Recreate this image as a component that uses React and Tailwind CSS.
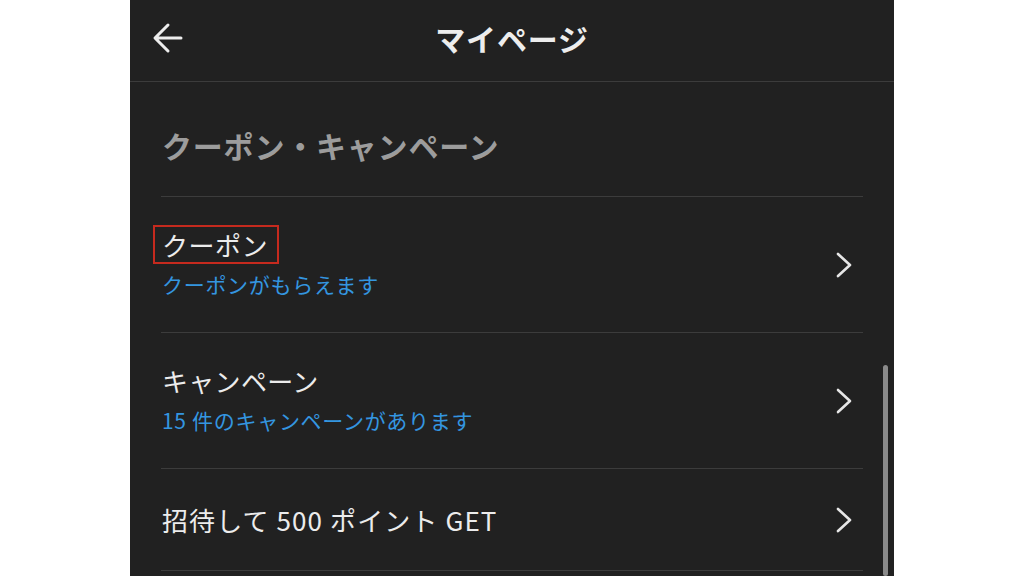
import React from "react";

const rows = [
  { title: "クーポン", sub: "クーポンがもらえます", boxed: true, track: "tracking-[0.5px]" },
  { title: "キャンペーン", sub: "15 件のキャンペーンがあります", track: "tracking-[0.3px]" },
  { title: "招待して 500 ポイント GET", track: "tracking-[1.1px]" },
];

function Chevron() {
  return (
    <svg width="16" height="26" viewBox="0 0 16 26" fill="none">
      <path d="M2 2 L14 13 L2 24" stroke="#e6e6e6" strokeWidth="2.6" strokeLinecap="round" strokeLinejoin="round" />
    </svg>
  );
}

export default function App() {
  return (
    <div
      className="w-[1024px] h-[576px] bg-white flex justify-center overflow-hidden"
      style={{ fontFamily: '"Noto Sans CJK JP", "Noto Sans", sans-serif' }}
    >
      <div className="w-[764px] h-full bg-[#212121] relative flex flex-col">
        {/* header */}
        <div className="h-[82px] shrink-0 border-b border-[#3c3c3c] flex items-center justify-center relative">
          <button className="absolute left-[22px] top-[22px]">
            <svg width="32" height="32" viewBox="0 0 32 32" fill="none">
              <path d="M29 16 H4 M16 3 L3 16 L16 29" stroke="#ededed" strokeWidth="3" strokeLinecap="round" strokeLinejoin="round" />
            </svg>
          </button>
          <h1 className="text-[30px] font-bold text-[#ededed] leading-none -mt-[6px] tracking-[0.8px]">マイページ</h1>
        </div>

        <div className="px-[31px]">
          <div className="h-[115px] flex items-center pt-[11px] border-b border-[#3c3c3c]">
            <h2 className="text-[30px] font-bold text-[#9c9c9c] leading-none pl-[1px] tracking-[0.8px]">クーポン・キャンペーン</h2>
          </div>

          {rows.map((r) => (
            <div
              key={r.title}
              className={`${r.sub ? "h-[136px]" : "h-[102px]"} flex items-center justify-between border-b border-[#3c3c3c] pl-[1px] pr-[11px]`}
            >
              <div className="flex flex-col">
                <div className="relative self-start">
                  <span className={`text-[26px] text-[#ececec] leading-[36px] ${r.track}`}>{r.title}</span>
                  {r.boxed && (
                    <span className="absolute -left-[9px] -right-[11px] -top-[2px] -bottom-[1px] border-2 border-[#c62a1e]" />
                  )}
                </div>
                {r.sub && (
                  <span className="text-[21px] text-[#3496e0] leading-[36px] mt-[3px] tracking-[0.7px]">{r.sub}</span>
                )}
              </div>
              <Chevron />
            </div>
          ))}
        </div>

        <div className="absolute right-[6px] top-[365px] bottom-0 w-[5px] rounded-full bg-[#8a8a8a]" />
      </div>
    </div>
  );
}
